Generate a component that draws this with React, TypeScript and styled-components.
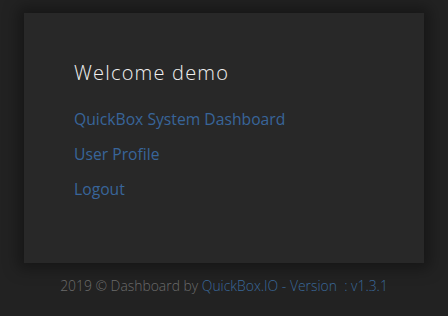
import styled, { createGlobalStyle } from "styled-components";

const GlobalStyle = createGlobalStyle`
  html, body {
    margin: 0;
    padding: 0;
    background: #222222;
  }
  body {
    font-family: "Open Sans", "Noto Sans", sans-serif;
  }
`;

const Page = styled.div`
  width: 448px;
  height: 316px;
  padding-top: 13px;
  box-sizing: border-box;
  display: flex;
  flex-direction: column;
  align-items: center;
  overflow: hidden;
`;

const Card = styled.div`
  width: 400px;
  height: 250px;
  box-sizing: border-box;
  background: #282828;
  box-shadow: 0 0 14px 6px rgba(0, 0, 0, 0.35);
  padding: 47px 50px 0;
`;

const Welcome = styled.h3`
  margin: 0 0 21px;
  font-size: 20px;
  font-weight: 300;
  letter-spacing: 1.2px;
  line-height: 26px;
  color: #f0f0f0;
`;

const Links = styled.div`
  display: flex;
  flex-direction: column;
  align-items: flex-start;
  gap: 10px;
`;

const NavLink = styled.a`
  font-size: 15.7px;
  font-weight: 400;
  line-height: 25px;
  color: #38659a;
  text-decoration: none;
`;

const Footer = styled.footer`
  margin-top: 13px;
  font-size: 13.9px;
  font-weight: 300;
  color: #6b6b6b;
  white-space: nowrap;
`;

const FootLink = styled.a`
  color: #3a6899;
  text-decoration: none;
`;

export default function App() {
  return (
    <>
      <GlobalStyle />
      <Page>
        <Card>
          <Welcome>Welcome demo</Welcome>
          <Links>
            <NavLink href="#">QuickBox System Dashboard</NavLink>
            <NavLink href="#">User Profile</NavLink>
            <NavLink href="#">Logout</NavLink>
          </Links>
        </Card>
        <Footer>
          2019 &copy; Dashboard by <FootLink href="#">QuickBox.IO</FootLink>{" "}
          <FootLink href="#">- Version&nbsp;&nbsp;: v1.3.1</FootLink>
        </Footer>
      </Page>
    </>
  );
}
